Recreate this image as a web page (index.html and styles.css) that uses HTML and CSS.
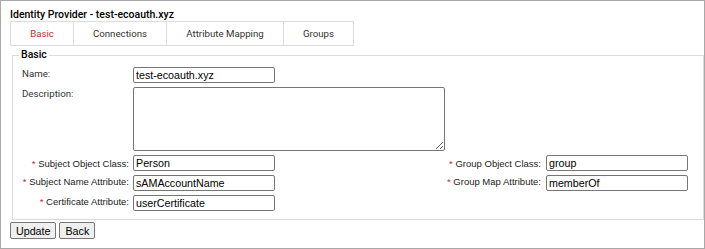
FILE: index.html
```html
<!DOCTYPE html>
<html>
<head>
<meta charset="utf-8">
<title>Identity Provider</title>
<link rel="stylesheet" href="styles.css">
</head>
<body>
<div class="panel">
  <div class="title">Identity Provider - test-ecoauth.xyz</div>
  <div class="tabs">
    <div class="tab tab-basic active">Basic</div>
    <div class="tab tab-conn">Connections</div>
    <div class="tab tab-attr">Attribute Mapping</div>
    <div class="tab tab-groups">Groups</div>
  </div>
  <fieldset class="box">
    <legend class="legend">Basic</legend>
    <div class="form">
      <label class="lbl">Name:</label>
      <input class="field" type="text" value="test-ecoauth.xyz">
      <label class="lbl">Description:</label>
      <textarea class="area"></textarea>

      <label class="lbl req first">* <span class="t">Subject Object Class:</span></label>
      <input class="field first" type="text" value="Person">
      <label class="lbl req right first">* <span class="t">Group Object Class:</span></label>
      <input class="field first" type="text" value="group">

      <label class="lbl req">* <span class="t">Subject Name Attribute:</span></label>
      <input class="field" type="text" value="sAMAccountName">
      <label class="lbl req right">* <span class="t">Group Map Attribute:</span></label>
      <input class="field" type="text" value="memberOf">

      <label class="lbl req">* <span class="t">Certificate Attribute:</span></label>
      <input class="field" type="text" value="userCertificate">
    </div>
  </fieldset>
  <div class="actions">
    <button class="btn" type="button">Update</button>
    <button class="btn" type="button">Back</button>
  </div>
</div>
</body>
</html>
```
FILE: styles.css
```css
html, body {
  margin: 0;
  padding: 0;
  background: #ffffff;
}

.panel {
  box-sizing: border-box;
  width: 705px;
  height: 249px;
  border: 1px solid #a8a8a8;
  padding: 7px 0 0 9px;
  font-family: Roboto, "Liberation Sans", sans-serif;
  color: #222;
}

.title {
  font-size: 10.5px;
  font-weight: 500;
  line-height: 13px;
  color: #000;
}

.tabs {
  display: flex;
  height: 25px;
}

.tab {
  box-sizing: border-box;
  height: 25px;
  border: 1px solid #dcdcdc;
  font-size: 9.7px;
  line-height: 23px;
  text-align: center;
  color: #333;
  background: #fff;
}

.tab + .tab {
  margin-left: -1px;
}

.tab-basic { width: 64px; }
.tab-conn { width: 94px; }
.tab-attr { width: 118px; }
.tab-groups { width: 71px; }

.tab.active {
  color: #c62d2d;
}

.box {
  margin: 2px 0 0 2px;
  padding: 5px 15px 8px 9px;
  border: 1px solid #dadada;
  min-width: 0;
}

.legend {
  font-size: 10.5px;
  font-weight: 500;
  line-height: 14px;
  color: #000;
  padding: 0 2px;
  margin-left: -3px;
}

.form {
  display: grid;
  grid-template-columns: 107px 142px 1fr 142px;
  column-gap: 4px;
  row-gap: 4px;
  align-items: start;
}

.lbl {
  grid-column: 1;
  font-size: 9.7px;
  line-height: 14px;
  color: #333;
  white-space: nowrap;
}

.lbl.req {
  font-family: "Liberation Sans", Arial, sans-serif;
  font-size: 9.5px;
  text-align: right;
  color: #c62d2d;
}

.lbl.req .t {
  color: #222;
}

.lbl.right {
  grid-column: 3;
  padding-right: 1px;
}

.first {
  margin-top: 2px;
}

.field {
  box-sizing: border-box;
  width: 142px;
  height: 16px;
  margin: 0;
  padding: 0 2px;
  border: 1px solid #767676;
  border-radius: 2px;
  font-family: "Liberation Sans", Arial, sans-serif;
  font-size: 10.7px;
  color: #000;
  background: #fff;
}

.area {
  grid-column: 2 / 5;
  justify-self: start;
  box-sizing: border-box;
  width: 312px;
  height: 64px;
  margin: 0;
  padding: 1px 2px;
  border: 1px solid #767676;
  border-radius: 2px;
  font-family: "Liberation Sans", Arial, sans-serif;
  font-size: 10.7px;
}

.actions {
  display: flex;
  gap: 3px;
  margin-top: 2px;
}

.btn {
  box-sizing: border-box;
  height: 17px;
  margin: 0;
  padding: 0 5px;
  border: 1px solid #767676;
  border-radius: 2px;
  background: #efefef;
  font-family: "Liberation Sans", Arial, sans-serif;
  font-size: 10.7px;
  color: #000;
}
```
